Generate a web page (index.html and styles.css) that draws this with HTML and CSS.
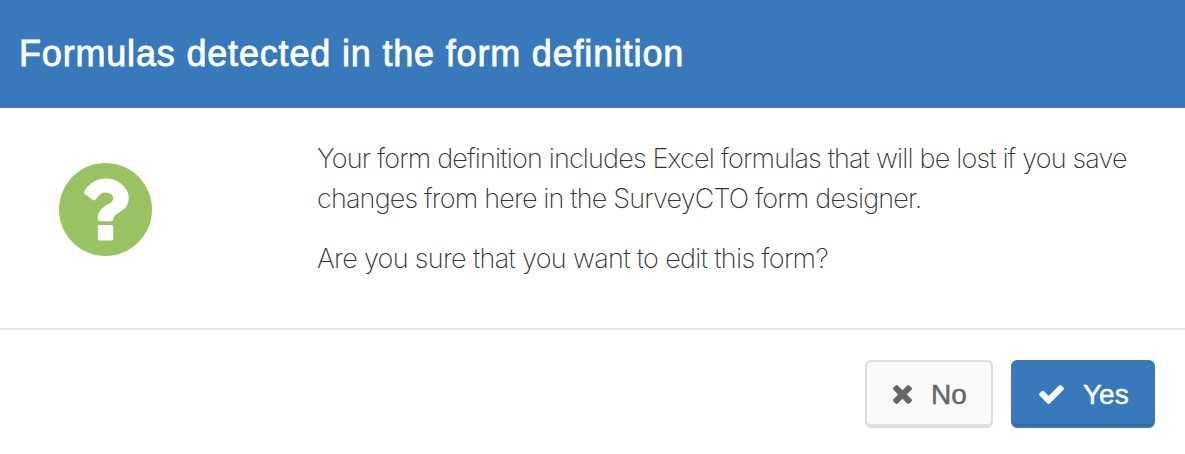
FILE: index.html
```html
<!DOCTYPE html>
<html lang="en">
<head>
    <meta charset="UTF-8">
    <meta name="viewport" content="width=device-width, initial-scale=1.0">
    <title>Formulas detected in the form definition</title>
    <link rel="stylesheet" href="styles.css">
</head>
<body>
    <div class="dialog">
        <div class="dialog-header">
            <h1>Formulas detected in the form definition</h1>
        </div>

        <div class="dialog-body">
            <svg class="question-icon" viewBox="128 128 1536 1536">
                <path d="M1024 1376v-192q0-14-9-23t-23-9h-192q-14 0-23 9t-9 23v192q0 14 9 23t23 9h192q14 0 23-9t9-23zm256-672q0-88-55.5-163t-138.5-116-170-41q-243 0-371 213-15 24 8 42l132 100q7 6 19 6 16 0 25-12 53-68 86-92 34-24 86-24 48 0 85.5 26t37.5 59q0 38-20 61t-68 45q-63 28-115.5 86.5t-52.5 125.5v36q0 14 9 23t23 9h192q14 0 23-9t9-23q0-19 21.5-49.5t54.5-49.5q32-18 49-28.5t46-35 44.5-48 28-60.5 12.5-81zm384 192q0 209-103 385.5t-279.5 279.5-385.5 103-385.5-103-279.5-279.5-103-385.5 103-385.5 279.5-279.5 385.5-103 385.5 103 279.5 279.5 103 385.5z"/>
            </svg>
            <div class="message">
                <p>Your form definition includes Excel formulas that will be lost if you save <br>changes from here in the SurveyCTO form designer.</p>
                <p class="question">Are you sure that you want to edit this form?</p>
            </div>
        </div>

        <div class="dialog-footer">
            <button class="btn btn-default">
                <svg class="icon-times" viewBox="302 366 1188 1188">
                    <path d="M1490 1322q0 40-28 68l-136 136q-28 28-68 28t-68-28l-294-294-294 294q-28 28-68 28t-68-28l-136-136q-28-28-28-68t28-68l294-294-294-294q-28-28-28-68t28-68l136-136q28-28 68-28t68 28l294 294 294-294q28-28 68-28t68 28l136 136q28 28 28 68t-28 68l-294 294 294 294q28 28 28 68z"/>
                </svg>
                <span>No</span>
            </button>
            <button class="btn btn-primary">
                <svg class="icon-check" viewBox="121 334 1550 1188">
                    <path d="M1671 566q0 40-28 68l-724 724-136 136q-28 28-68 28t-68-28l-136-136-362-362q-28-28-28-68t28-68l136-136q28-28 68-28t68 28l294 295 656-657q28-28 68-28t68 28l136 136q28 28 28 68z"/>
                </svg>
                <span>Yes</span>
            </button>
        </div>
    </div>
</body>
</html>
```
FILE: styles.css
```css
* {
    box-sizing: border-box;
}
body {
    margin: 0;
    background-color: #fff;
    font-family: "Liberation Sans", Arial, sans-serif;
}
.dialog {
    display: flex;
    flex-direction: column;
    height: 454px;
}
.dialog-header {
    display: flex;
    align-items: center;
    height: 108px;
    padding: 0 19px;
    background-color: #3779bb;
}
h1 {
    margin: 0;
    color: #fff;
    font-size: 36px;
    font-weight: 400;
    letter-spacing: 0.82px;
    line-height: 40px;
    white-space: nowrap;
    -webkit-text-stroke: 0.8px #fff;
}
.dialog-body {
    display: flex;
    align-items: flex-start;
    height: 222px;
    padding: 31px 0 0 59px;
    border-bottom: 2px solid #e5e5e5;
}
.question-icon {
    flex: none;
    width: 93px;
    height: 93px;
    margin: 24px 165px 0 0;
    fill: #99c262;
}
.message {
    color: #333;
    font-family: Inter, "Liberation Sans", sans-serif;
    font-size: 27px;
    font-weight: 200;
    letter-spacing: -0.83px;
    line-height: 40px;
    white-space: nowrap;
}
.message p {
    margin: 0 0 20px;
}
.message .question {
    letter-spacing: -0.67px;
}
.dialog-footer {
    display: flex;
    justify-content: flex-end;
    gap: 18px;
    padding: 30px 30px 0 0;
}
.btn {
    display: flex;
    align-items: center;
    height: 68px;
    padding: 1px 20px 0 26px;
    border: 2px solid #ddd;
    border-radius: 6px;
    font-family: inherit;
    font-size: 28px;
    cursor: pointer;
}
.btn svg {
    flex: none;
    height: 19px;
    margin-right: 19px;
    fill: currentColor;
}
.btn-default {
    width: 128px;
    background-color: #fafafa;
    box-shadow: inset 0 -2px 0 #e1e1e1;
    color: #666;
    -webkit-text-stroke: 0.5px #666;
}
.btn-primary {
    width: 144px;
    border-color: #4079ad;
    background-color: #3779bb;
    box-shadow: inset 0 -2px 0 #316ca7;
    color: #fff;
    -webkit-text-stroke: 0.5px #fff;
}
.btn path {
    stroke: none;
}
.icon-times {
    width: 19px;
}
.icon-check {
    width: 25px;
}
```
